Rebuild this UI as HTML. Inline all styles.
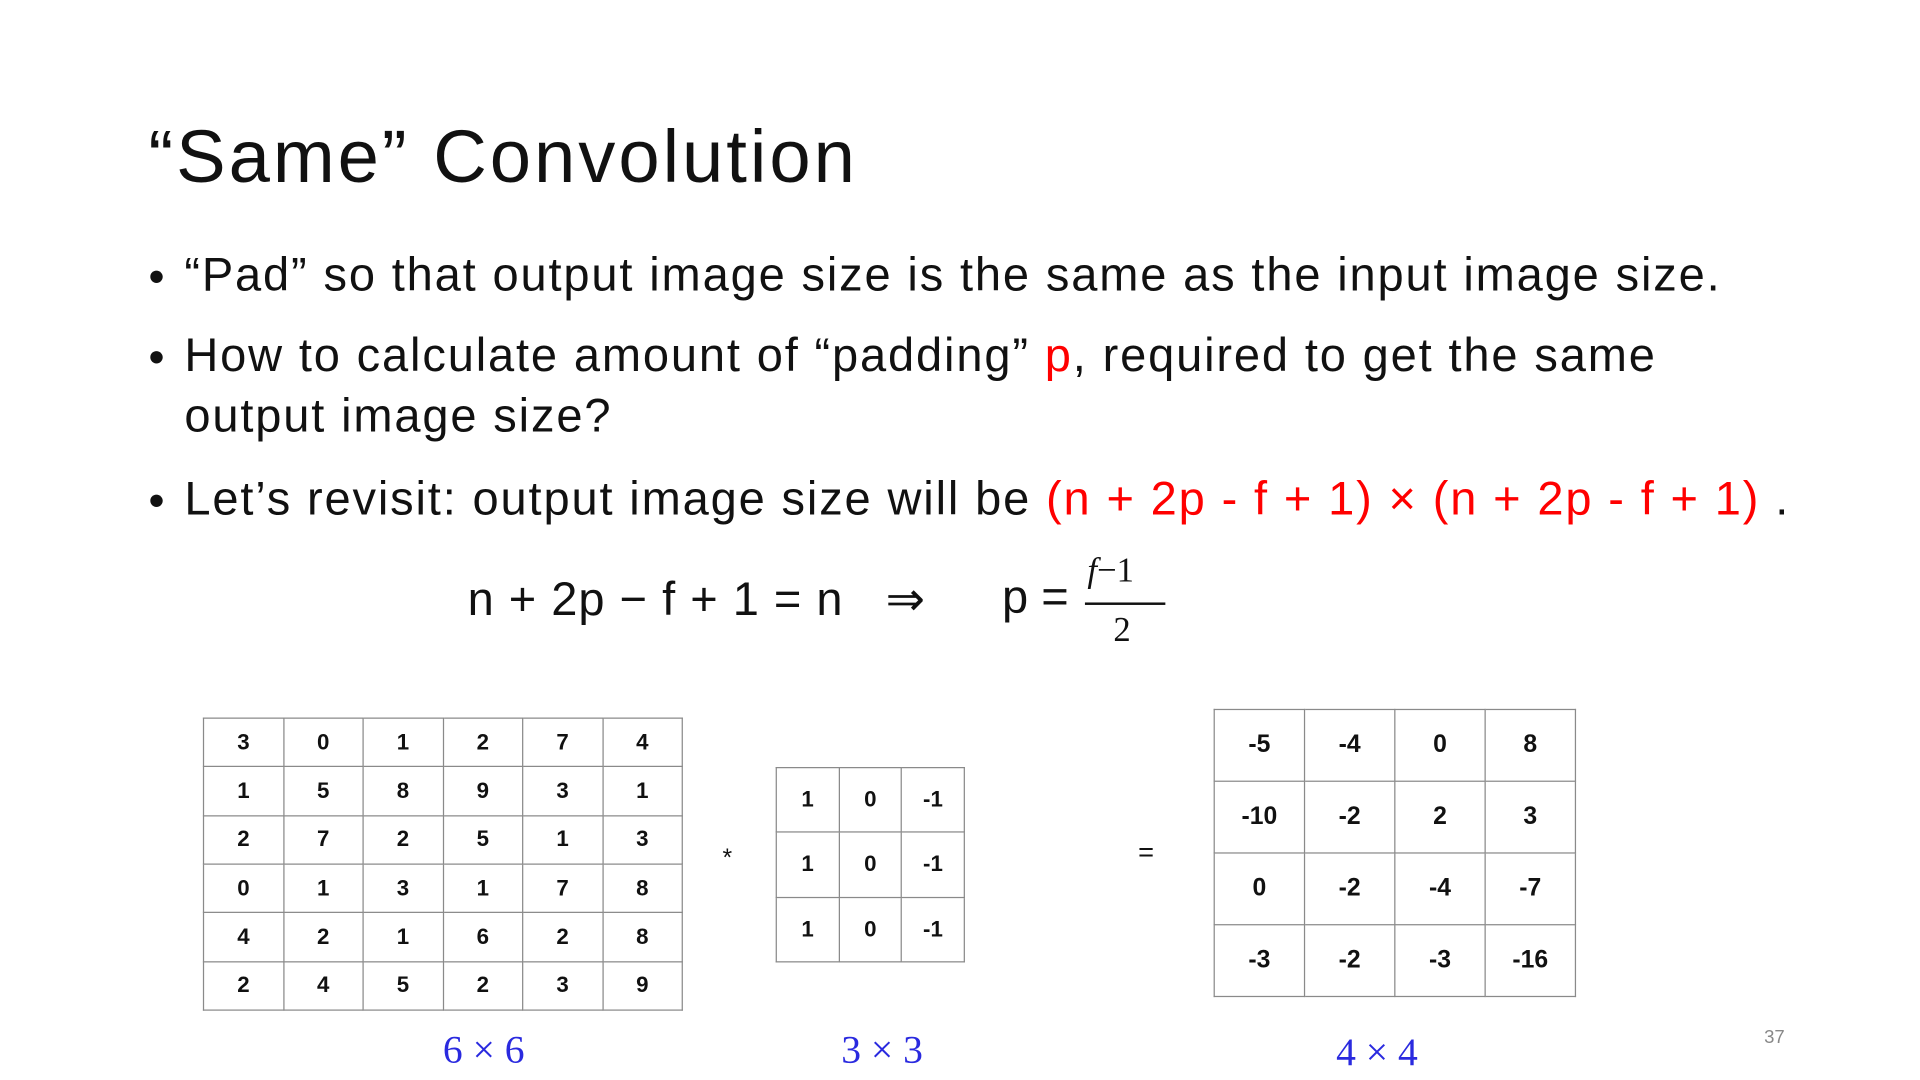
<!DOCTYPE html>
<html><head><meta charset="utf-8"><style>
html,body{margin:0;padding:0;background:#fff;width:1920px;height:1080px;overflow:hidden}
#s{position:absolute;left:0;top:0;width:1552px;height:873px;transform:scale(1.2371);transform-origin:0 0;font-family:"Liberation Sans",sans-serif;color:#111}
.a{position:absolute;white-space:nowrap}
.r{color:#f00}
.b{font-size:38px;letter-spacing:1.5px}
table{position:absolute;border-collapse:collapse;font-weight:bold;font-size:18px;table-layout:fixed}
td{border:1.5px solid #8a8a8a;text-align:center;padding:0}
.lb{position:absolute;font-family:"Liberation Serif",serif;color:#2a2adf;font-size:32px;white-space:nowrap}
</style></head><body><div id="s">
<div class="a" style="left:120px;top:92px;font-size:60px;letter-spacing:2.4px">“Same” Convolution</div>
<div class="a" style="left:120px;top:203px;font-size:37px">•</div>
<div class="a b" style="left:149px;top:202px">“Pad” so that output image size is the same as the input image size.</div>
<div class="a" style="left:120px;top:268px;font-size:37px">•</div>
<div class="a b" style="left:149px;top:267px">How to calculate amount of “padding” <span class="r">p</span>, required to get the same</div>
<div class="a b" style="left:149px;top:316px">output image size?</div>
<div class="a" style="left:120px;top:384px;font-size:37px">•</div>
<div class="a b" style="left:149px;top:383px">Let’s revisit: output image size will be <span class="r">(n + 2p - f + 1) × (n + 2p - f + 1)</span> .</div>
<div class="a" style="left:378px;top:462px;font-size:38px;letter-spacing:0.8px">n + 2p − f + 1 = n &nbsp;&nbsp;⇒</div>
<div class="a" style="left:810px;top:462px;font-size:38px">p =</div>
<div class="a" style="left:879px;top:446px;font-size:28px;font-family:'Liberation Serif',serif"><i>f</i>−1</div>
<div class="a" style="left:877px;top:487px;width:65px;height:2px;background:#111"></div>
<div class="a" style="left:900px;top:494px;font-size:28px;font-family:'Liberation Serif',serif">2</div>
<table style="left:164px;top:580px;width:388px;height:237px">
<tr><td>3</td><td>0</td><td>1</td><td>2</td><td>7</td><td>4</td></tr>
<tr><td>1</td><td>5</td><td>8</td><td>9</td><td>3</td><td>1</td></tr>
<tr><td>2</td><td>7</td><td>2</td><td>5</td><td>1</td><td>3</td></tr>
<tr><td>0</td><td>1</td><td>3</td><td>1</td><td>7</td><td>8</td></tr>
<tr><td>4</td><td>2</td><td>1</td><td>6</td><td>2</td><td>8</td></tr>
<tr><td>2</td><td>4</td><td>5</td><td>2</td><td>3</td><td>9</td></tr>
</table>
<div class="a" style="left:584px;top:683px;font-size:20px">*</div>
<table style="left:627px;top:620px;width:153px;height:158px">
<tr><td>1</td><td>0</td><td>-1</td></tr>
<tr><td>1</td><td>0</td><td>-1</td></tr>
<tr><td>1</td><td>0</td><td>-1</td></tr>
</table>
<div class="a" style="left:920px;top:676px;font-size:22px">=</div>
<table style="left:981px;top:573px;width:293px;height:233px;font-size:20px">
<tr><td>-5</td><td>-4</td><td>0</td><td>8</td></tr>
<tr><td>-10</td><td>-2</td><td>2</td><td>3</td></tr>
<tr><td>0</td><td>-2</td><td>-4</td><td>-7</td></tr>
<tr><td>-3</td><td>-2</td><td>-3</td><td>-16</td></tr>
</table>
<div class="lb" style="left:358px;top:830px">6 × 6</div>
<div class="lb" style="left:680px;top:830px">3 × 3</div>
<div class="lb" style="left:1080px;top:832px">4 × 4</div>
<div class="a" style="left:1426px;top:830px;font-size:15px;color:#888">37</div>
</div></body></html>
